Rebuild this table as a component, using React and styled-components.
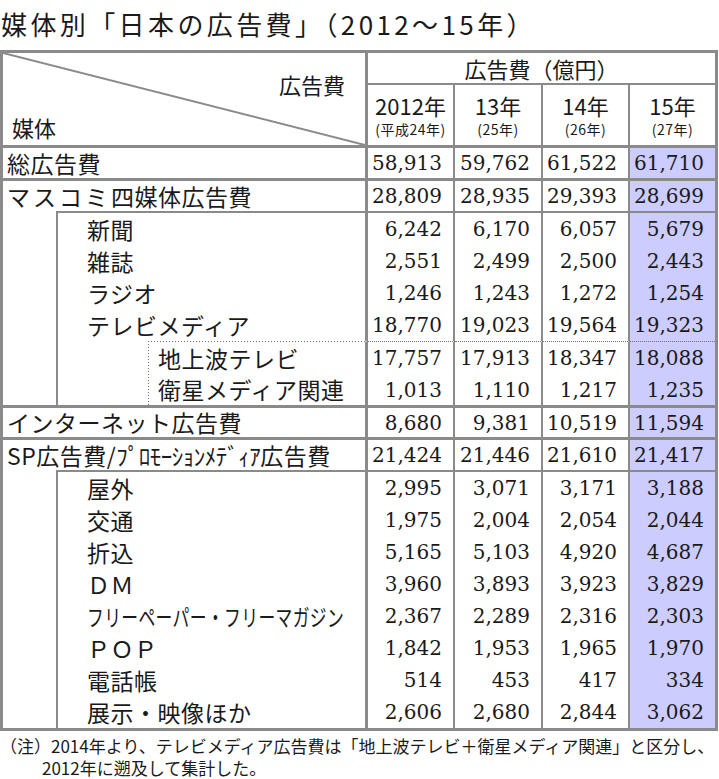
import React from "react";
import styled, { createGlobalStyle } from "styled-components";

const LINE = "#8a8a8a";
const DOT = "#6f6f6f";
const HL = "#ccccff";

const GlobalStyle = createGlobalStyle`
  html, body {
    margin: 0;
    padding: 0;
    background: #fff;
  }
  body {
    font-family: "Noto Sans CJK JP", "Noto Sans", sans-serif;
    color: #1a1a1a;
  }
`;

const Page = styled.div`
  width: 719px;
`;

const Title = styled.h1`
  margin: 0;
  height: 50px;
  line-height: 48px;
  padding-left: 1px;
  font-size: 26px;
  font-weight: 400;
  letter-spacing: 3.4px;
  white-space: nowrap;
`;

const Sheet = styled.div`
  display: grid;
  grid-template-columns: 365px 87px 88px 87px 85px;
  width: 712px;
  border: 3px solid ${LINE};
`;

const Corner = styled.div`
  grid-row: span 2;
  position: relative;
  box-sizing: border-box;
  display: flex;
  flex-direction: column;
  justify-content: space-between;
  padding: 20px 20px 7px 9px;
  border-right: 3px solid ${LINE};
  font-size: 22px;
  line-height: 1;

  svg {
    position: absolute;
    inset: 0;
    width: 100%;
    height: 100%;
  }
`;

const CornerTop = styled.span`
  align-self: flex-end;
`;

const Caption = styled.div`
  grid-column: span 4;
  height: 30px;
  display: flex;
  align-items: center;
  justify-content: center;
  font-size: 22px;
  line-height: 1;
`;

const YearCell = styled.div`
  box-sizing: border-box;
  height: 62px;
  display: flex;
  flex-direction: column;
  align-items: center;
  justify-content: center;
  gap: 6px;
  border-top: 2px solid ${LINE};
  border-right: ${(p) => (p.$last ? "none" : `2px solid ${LINE}`)};
`;

const Year = styled.span`
  font-size: 22px;
  line-height: 1;
`;

const Era = styled.span`
  font-size: 14px;
  line-height: 1;
  letter-spacing: 0.5px;
`;

const WIDTH = { thick: 3, thin: 2, dotted: 1 };

const solidTop = (top) => {
  if (top === "thick") return `3px solid ${LINE}`;
  if (top === "thin") return `2px solid ${LINE}`;
  if (top === "dotted") return `1px dotted ${DOT}`;
  return "none";
};

const guides = ({ $level, $first }) => {
  if ($level === 0) return "";
  const imgs = [`linear-gradient(${LINE}, ${LINE})`];
  const sizes = ["2px 100%"];
  const pos = ["53px 0"];
  if ($level === 1 && $first) {
    imgs.push(`linear-gradient(${LINE}, ${LINE})`);
    sizes.push("100% 2px");
    pos.push("53px 0");
  }
  if ($level === 2) {
    imgs.push(`repeating-linear-gradient(to bottom, ${DOT} 0 1px, transparent 1px 3px)`);
    sizes.push("1px 100%");
    pos.push("145px 0");
    if ($first) {
      imgs.push(`repeating-linear-gradient(to right, ${DOT} 0 1px, transparent 1px 3px)`);
      sizes.push("100% 1px");
      pos.push("145px 0");
    }
  }
  return `
    background-image: ${imgs.join(", ")};
    background-size: ${sizes.join(", ")};
    background-position: ${pos.join(", ")};
  `;
};

const Label = styled.div`
  box-sizing: border-box;
  height: ${(p) => p.$h}px;
  display: flex;
  align-items: center;
  padding-left: ${(p) => [4, 84, 155][p.$level]}px;
  border-right: 3px solid ${LINE};
  border-top: ${(p) =>
    p.$level === 0
      ? solidTop(p.$top)
      : p.$top
      ? `${WIDTH[p.$top]}px solid transparent`
      : "none"};
  background-origin: border-box;
  background-repeat: no-repeat;
  ${guides}
  font-size: 23px;
  letter-spacing: 0.5px;
  line-height: 1;
  white-space: nowrap;
`;

const Wide = styled.span`
  letter-spacing: 3px;
`;

const Narrow = styled.span`
  letter-spacing: -0.5px;
`;

const Squeeze = styled.span`
  display: inline-block;
  transform: scaleX(0.73);
  transform-origin: left center;
`;

const Num = styled.div`
  box-sizing: border-box;
  height: ${(p) => p.$h}px;
  display: flex;
  align-items: center;
  justify-content: flex-end;
  padding-right: 11px;
  border-top: ${(p) => solidTop(p.$top)};
  border-right: ${(p) => (p.$last ? "none" : `2px solid ${LINE}`)};
  background: ${(p) => (p.$last ? HL : "transparent")};
  font-family: "DejaVu Serif", "Liberation Serif", serif;
  font-size: 20px;
  line-height: 1;
`;

const Note = styled.p`
  margin: 0;
  padding: 4px 0 0 42px;
  text-indent: -42px;
  font-size: 17px;
  line-height: 22px;
  white-space: nowrap;
`;

const rows = [
  { label: "総広告費", level: 0, top: "thick", h: 33, vals: ["58,913", "59,762", "61,522", "61,710"] },
  {
    label: (
      <>
        <Wide>マスコミ</Wide>四媒体広告費
      </>
    ),
    level: 0,
    top: "thick",
    h: 33,
    vals: ["28,809", "28,935", "29,393", "28,699"],
  },
  { label: "新聞", level: 1, top: "thin", first: true, h: 34, vals: ["6,242", "6,170", "6,057", "5,679"] },
  { label: "雑誌", level: 1, h: 32, vals: ["2,551", "2,499", "2,500", "2,443"] },
  { label: "ラジオ", level: 1, h: 32, vals: ["1,246", "1,243", "1,272", "1,254"] },
  { label: "テレビメディア", level: 1, h: 32, vals: ["18,770", "19,023", "19,564", "19,323"] },
  { label: "地上波テレビ", level: 2, top: "dotted", first: true, h: 33, vals: ["17,757", "17,913", "18,347", "18,088"] },
  { label: "衛星メディア関連", level: 2, h: 31, vals: ["1,013", "1,110", "1,217", "1,235"] },
  { label: "インターネット広告費", level: 0, top: "thick", h: 32, vals: ["8,680", "9,381", "10,519", "11,594"] },
  {
    label: (
      <>
        SP広告費/<Narrow>ﾌﾟﾛﾓｰｼｮﾝﾒﾃﾞｨｱ</Narrow>広告費
      </>
    ),
    level: 0,
    top: "thick",
    h: 33,
    vals: ["21,424", "21,446", "21,610", "21,417"],
  },
  { label: "屋外", level: 1, top: "thin", first: true, h: 34, vals: ["2,995", "3,071", "3,171", "3,188"] },
  { label: "交通", level: 1, h: 32, vals: ["1,975", "2,004", "2,054", "2,044"] },
  { label: "折込", level: 1, h: 32, vals: ["5,165", "5,103", "4,920", "4,687"] },
  { label: "ＤＭ", level: 1, h: 32, vals: ["3,960", "3,893", "3,923", "3,829"] },
  {
    label: <Squeeze>フリーペーパー・フリーマガジン</Squeeze>,
    level: 1,
    h: 32,
    vals: ["2,367", "2,289", "2,316", "2,303"],
  },
  { label: "ＰＯＰ", level: 1, h: 32, vals: ["1,842", "1,953", "1,965", "1,970"] },
  { label: "電話帳", level: 1, h: 32, vals: ["514", "453", "417", "334"] },
  { label: "展示・映像ほか", level: 1, h: 32, vals: ["2,606", "2,680", "2,844", "3,062"] },
];

const years = [
  ["2012年", "(平成24年)"],
  ["13年", "(25年)"],
  ["14年", "(26年)"],
  ["15年", "(27年)"],
];

export default function App() {
  return (
    <Page>
      <GlobalStyle />
      <Title>媒体別「日本の広告費」（2012～15年）</Title>
      <Sheet>
        <Corner>
          <svg>
            <line x1="0" y1="0" x2="100%" y2="100%" stroke={LINE} strokeWidth="2" />
          </svg>
          <CornerTop>広告費</CornerTop>
          <span>媒体</span>
        </Corner>
        <Caption>広告費（億円）</Caption>
        {years.map(([y, era], i) => (
          <YearCell key={y} $last={i === 3}>
            <Year>{y}</Year>
            <Era>{era}</Era>
          </YearCell>
        ))}
        {rows.map((r, ri) => (
          <React.Fragment key={ri}>
            <Label $level={r.level} $top={r.top} $first={r.first} $h={r.h}>
              {r.label}
            </Label>
            {r.vals.map((v, i) => (
              <Num key={i} $top={r.top} $h={r.h} $last={i === 3}>
                {v}
              </Num>
            ))}
          </React.Fragment>
        ))}
      </Sheet>
      <Note>
        （注）2014年より、テレビメディア広告費は「地上波テレビ＋衛星メディア関連」と区分し、
        <br />
        2012年に遡及して集計した。
      </Note>
    </Page>
  );
}
